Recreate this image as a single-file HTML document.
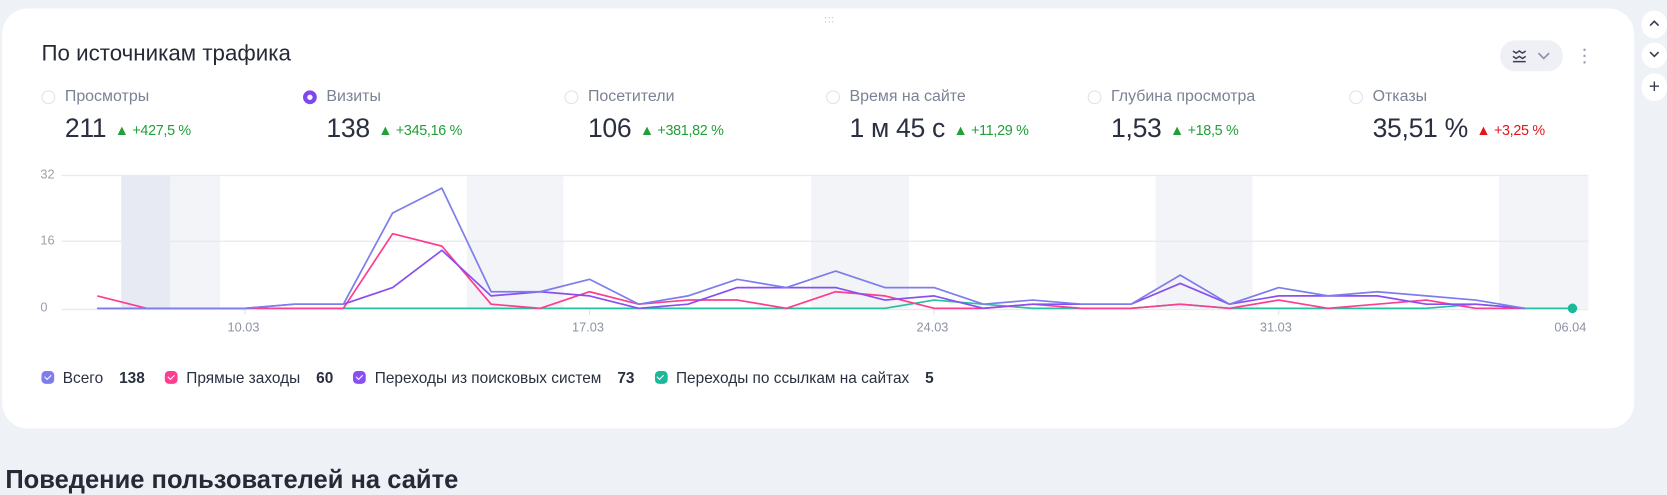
<!DOCTYPE html>
<html><head><meta charset="utf-8"><style>
*{margin:0;padding:0;box-sizing:border-box}
html,body{width:1667px;height:491px;overflow:hidden;background:#eef1f6;font-family:"Liberation Sans","DejaVu Sans",sans-serif}
#w{position:absolute;left:0;top:0;width:1568px;height:462px;transform:scale(1.0632);transform-origin:0 0}
.card{position:absolute;left:2px;top:8px;width:1535px;height:395px;background:#fff;border-radius:24px}
.abs{position:absolute;white-space:nowrap}
.title{left:39px;top:39px;font-size:21px;color:#252a36}
.lab{font-size:15px;color:#7b8294;top:82px}
.rad{width:13px;height:13px;border-radius:50%;border:1px solid #dfe2ea;top:85px}
.rad.on{border:4px solid #7f47f0;background:#fff}
.val{top:107px;font-size:25px;color:#2b3040;letter-spacing:-0.3px}
.val span{font-size:13.5px;color:#21a038;margin-left:8px;position:relative;top:-2px}
.val span.r{color:#e5141b}
.yl{font-size:12px;color:#9aa0ae}
.dl{font-size:12px;color:#8d93a2;top:301px}
.lg{top:348px;font-size:14.5px;color:#2b3040}
.cb{display:inline-block;width:12px;height:12px;border-radius:4px;vertical-align:-1px;margin-right:8px;position:relative}
.cb:after{content:"";position:absolute;left:3.5px;top:2px;width:3px;height:5px;border:solid #fff;border-width:0 1.5px 1.5px 0;transform:rotate(45deg)}
.lg b{font-weight:700;margin:0 19px 0 15px}
.side{position:absolute;left:1544px;width:24px;background:#fff;border-radius:12px;color:#555b6a;text-align:center;font-size:16px}
</style></head><body><div id="w">
<div class="card"></div>
<div class="abs" style="left:775px;top:14px;color:#aab0bd;font-size:9px;line-height:4px;letter-spacing:1px">∙∙∙<br>∙∙∙</div>
<div class="abs title">По источникам трафика</div>
<div class="abs" style="left:1411px;top:38px;width:59px;height:29px;background:#eef0f6;border-radius:14px">
<svg width="59" height="29" viewBox="0 0 59 29"><path d="M12 10l3 2 3-2 3 2 3-2M12 15l3 2 3-2 3 2 3-2M12 20h12" stroke="#3a3f4d" stroke-width="1.4" fill="none"/><path d="M36 12l5 5 5-5" stroke="#8c93a3" stroke-width="1.6" fill="none"/></svg></div>
<div class="abs" style="left:1487px;top:43px;width:4px;color:#9aa0ae;font-size:20px;line-height:6px">·<br>·<br>·</div>
<div class="side" style="top:10px;height:26px;line-height:24px">
<svg width="12" height="8" viewBox="0 0 12 8"><path d="M2 6l4-4 4 4" stroke="#3a3f4d" stroke-width="1.5" fill="none"/></svg></div>
<div class="side" style="top:40px;height:24px;line-height:22px">
<svg width="12" height="8" viewBox="0 0 12 8"><path d="M2 2l4 4 4-4" stroke="#3a3f4d" stroke-width="1.5" fill="none"/></svg></div>
<div class="side" style="top:69px;height:26px;line-height:25px;font-size:18px;color:#3a3f4d">+</div>

<div class="abs rad" style="left:39px"></div><div class="abs lab" style="left:61px">Просмотры</div>
<div class="abs val" style="left:61px">211<span>▲ +427,5 %</span></div>
<div class="abs rad on" style="left:285px"></div><div class="abs lab" style="left:307px">Визиты</div>
<div class="abs val" style="left:307px">138<span>▲ +345,16 %</span></div>
<div class="abs rad" style="left:531px"></div><div class="abs lab" style="left:553px">Посетители</div>
<div class="abs val" style="left:553px">106<span>▲ +381,82 %</span></div>
<div class="abs rad" style="left:777px"></div><div class="abs lab" style="left:799px">Время на сайте</div>
<div class="abs val" style="left:799px">1 м 45 с<span>▲ +11,29 %</span></div>
<div class="abs rad" style="left:1023px"></div><div class="abs lab" style="left:1045px">Глубина просмотра</div>
<div class="abs val" style="left:1045px">1,53<span>▲ +18,5 %</span></div>
<div class="abs rad" style="left:1269px"></div><div class="abs lab" style="left:1291px">Отказы</div>
<div class="abs val" style="left:1291px">35,51 %<span class="r">▲ +3,25 %</span></div>

<svg class="abs" style="left:0;top:0" width="1568" height="330" viewBox="0 0 1568 330">
<rect x="114" y="165" width="46" height="125" fill="#e7eaf3"/>
<rect x="160" y="165" width="47" height="125" fill="#f3f4f8"/>
<rect x="439" y="165" width="91" height="125" fill="#f3f4f8"/>
<rect x="763" y="165" width="92" height="125" fill="#f3f4f8"/>
<rect x="1087" y="165" width="91" height="125" fill="#f3f4f8"/>
<rect x="1410" y="165" width="84" height="125" fill="#f3f4f8"/>
<path d="M58 165H1494M58 227H1494M58 291H1494" stroke="#e8eaf0" stroke-width="1.3"/>
<path d="M230.4 291v5M554.5 291v5M878.6 291v5M1202.7 291v5" stroke="#dde0e8"/>
<g fill="none" stroke-width="1.6" stroke-linejoin="round">
<polyline stroke="#27c0a0" points="91.5,290 832.3,290 878.6,282.2 924.9,286.1 971.2,290 1063.8,290 1110.1,286.1 1156.4,290 1341.6,290 1387.9,286.1 1434.2,290 1480,290"/>
<polyline stroke="#fb3e8f" points="91.5,278.3 137.8,290 323,290 369.3,219.8 415.6,231.5 461.9,286.1 508.2,290 554.5,274.4 600.8,286.1 647.1,282.2 693.4,282.2 739.7,290 786,274.4 832.3,278.3 878.6,290 924.9,290 971.2,286.1 1017.5,290 1063.8,290 1110.1,286.1 1156.4,290 1202.7,282.2 1249,290 1295.3,286.1 1341.6,282.2 1387.9,290 1434.2,290"/>
<polyline stroke="#8a4ff0" points="91.5,290 230.4,290 276.7,286.1 323,286.1 369.3,270.5 415.6,235.4 461.9,278.3 508.2,274.4 554.5,278.3 600.8,290 647.1,286.1 693.4,270.5 739.7,270.5 786,270.5 832.3,282.2 878.6,278.3 924.9,290 971.2,286.1 1017.5,286.1 1063.8,286.1 1110.1,266.6 1156.4,286.1 1202.7,278.3 1249,278.3 1295.3,278.3 1341.6,286.1 1387.9,286.1 1434.2,290"/>
<polyline stroke="#7d7deb" points="91.5,290 230.4,290 276.7,286.1 323,286.1 369.3,200.3 415.6,176.9 461.9,274.4 508.2,274.4 554.5,262.7 600.8,286.1 647.1,278.3 693.4,262.7 739.7,270.5 786,254.9 832.3,270.5 878.6,270.5 924.9,286.1 971.2,282.2 1017.5,286.1 1063.8,286.1 1110.1,258.8 1156.4,286.1 1202.7,270.5 1249,278.3 1295.3,274.4 1341.6,278.3 1387.9,282.2 1434.2,290"/>
</g>
<circle cx="1479" cy="290" r="4.5" fill="#1cb89a"/>
</svg>
<div class="abs yl" style="left:38px;top:157px">32</div>
<div class="abs yl" style="left:38px;top:219px">16</div>
<div class="abs yl" style="left:38px;top:282px">0</div>
<div class="abs dl" style="left:214px">10.03</div>
<div class="abs dl" style="left:538px">17.03</div>
<div class="abs dl" style="left:862px">24.03</div>
<div class="abs dl" style="left:1185px">31.03</div>
<div class="abs dl" style="left:1462px">06.04</div>

<div class="abs lg" style="left:39px"><i class="cb" style="background:#7d7deb"></i>Всего<b>138</b><i class="cb" style="background:#fb3e8f"></i>Прямые заходы<b>60</b><i class="cb" style="background:#8a4ff0"></i>Переходы из поисковых систем<b>73</b><i class="cb" style="background:#1cb89a"></i>Переходы по ссылкам на сайтах<b>5</b></div>

<div class="abs" style="left:5px;top:438px;font-size:24px;font-weight:700;color:#252a36">Поведение пользователей на сайте</div>
</div></body></html>
